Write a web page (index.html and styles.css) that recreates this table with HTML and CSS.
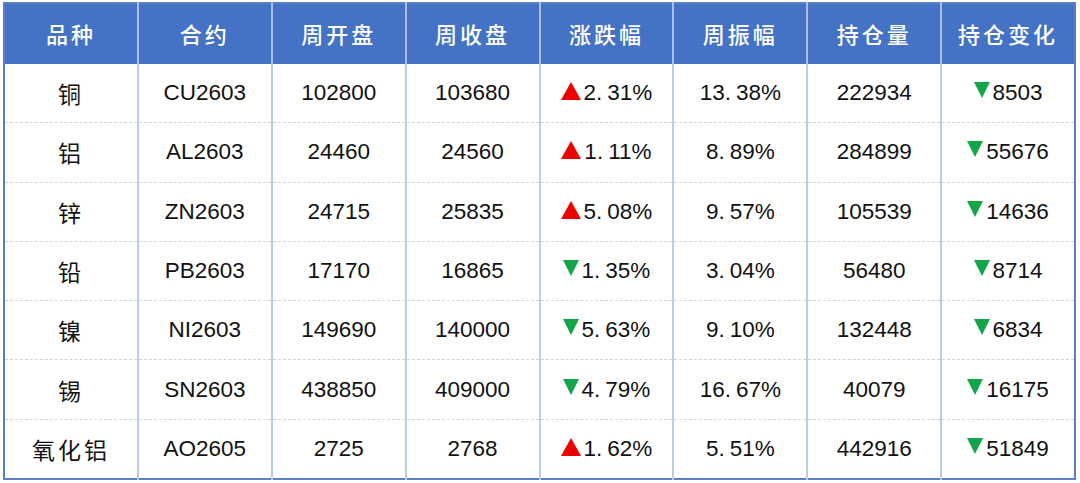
FILE: index.html
```html
<!DOCTYPE html>
<html lang="zh">
<head>
<meta charset="utf-8">
<link rel="stylesheet" href="styles.css">
</head>
<body>
<table class="grid">
  <thead>
    <tr><th>品种</th><th>合约</th><th>周开盘</th><th>周收盘</th><th>涨跌幅</th><th>周振幅</th><th>持仓量</th><th>持仓变化</th></tr>
  </thead>
  <tbody>
    <tr><td class="cn">铜</td><td>CU2603</td><td>102800</td><td>103680</td><td><span class="up"></span>2<span class="pt">.</span>31%</td><td>13<span class="pt">.</span>38%</td><td>222934</td><td><span class="dn"></span>8503</td></tr>
    <tr><td class="cn">铝</td><td>AL2603</td><td>24460</td><td>24560</td><td><span class="up"></span>1<span class="pt">.</span>11%</td><td>8<span class="pt">.</span>89%</td><td>284899</td><td><span class="dn"></span>55676</td></tr>
    <tr><td class="cn">锌</td><td>ZN2603</td><td>24715</td><td>25835</td><td><span class="up"></span>5<span class="pt">.</span>08%</td><td>9<span class="pt">.</span>57%</td><td>105539</td><td><span class="dn"></span>14636</td></tr>
    <tr><td class="cn">铅</td><td>PB2603</td><td>17170</td><td>16865</td><td><span class="dn"></span>1<span class="pt">.</span>35%</td><td>3<span class="pt">.</span>04%</td><td>56480</td><td><span class="dn"></span>8714</td></tr>
    <tr><td class="cn">镍</td><td>NI2603</td><td>149690</td><td>140000</td><td><span class="dn"></span>5<span class="pt">.</span>63%</td><td>9<span class="pt">.</span>10%</td><td>132448</td><td><span class="dn"></span>6834</td></tr>
    <tr><td class="cn">锡</td><td>SN2603</td><td>438850</td><td>409000</td><td><span class="dn"></span>4<span class="pt">.</span>79%</td><td>16<span class="pt">.</span>67%</td><td>40079</td><td><span class="dn"></span>16175</td></tr>
    <tr><td class="cn">氧化铝</td><td>AO2605</td><td>2725</td><td>2768</td><td><span class="up"></span>1<span class="pt">.</span>62%</td><td>5<span class="pt">.</span>51%</td><td>442916</td><td><span class="dn"></span>51849</td></tr>
  </tbody>
</table>
</body>
</html>
```
FILE: styles.css
```css
html, body {
  margin: 0;
  background: #ffffff;
}
body {
  padding: 2px 4px 0 3px;
  font-family: "Liberation Sans", "Noto Sans CJK SC", sans-serif;
  color: #111;
}
.grid {
  width: 1073px;
  height: 478px;
  border-collapse: collapse;
  table-layout: fixed;
  border: 2px solid #5b7fc6;
}
.grid th {
  background: #4472c4;
  color: #fff;
  height: 57px;
  padding: 0 0 2px 0;
  font-family: "Noto Sans CJK SC", sans-serif;
  font-size: 22px;
  font-weight: 500;
  letter-spacing: 3px;
  border-left: 2px solid #a8c0ea;
  text-align: center;
  vertical-align: middle;
}
.grid th:first-child { border-left: none; }
.grid td {
  height: 58px;
  padding: 0;
  text-align: center;
  vertical-align: middle;
  font-size: 22.5px;
  border-left: 2px solid #bccbe8;
  border-top: 1px dashed #d4d4d4;
}
.grid td:first-child { border-left: none; }
.grid tbody tr:first-child td { border-top: 1px solid #4472c4; }
.grid td.cn {
  font-family: "Noto Sans CJK SC", sans-serif;
  font-size: 23px;
  letter-spacing: 3px;
}
.pt {
  margin-right: 5px;
}
.up, .dn {
  display: inline-block;
  width: 0;
  height: 0;
  margin-right: 3px;
}
.up {
  border-left: 10px solid transparent;
  border-right: 10px solid transparent;
  border-bottom: 18px solid #ee0000;
  vertical-align: 0;
}
.dn {
  border-left: 8px solid transparent;
  border-right: 8px solid transparent;
  border-top: 16px solid #12a54a;
  vertical-align: 2px;
}
```
